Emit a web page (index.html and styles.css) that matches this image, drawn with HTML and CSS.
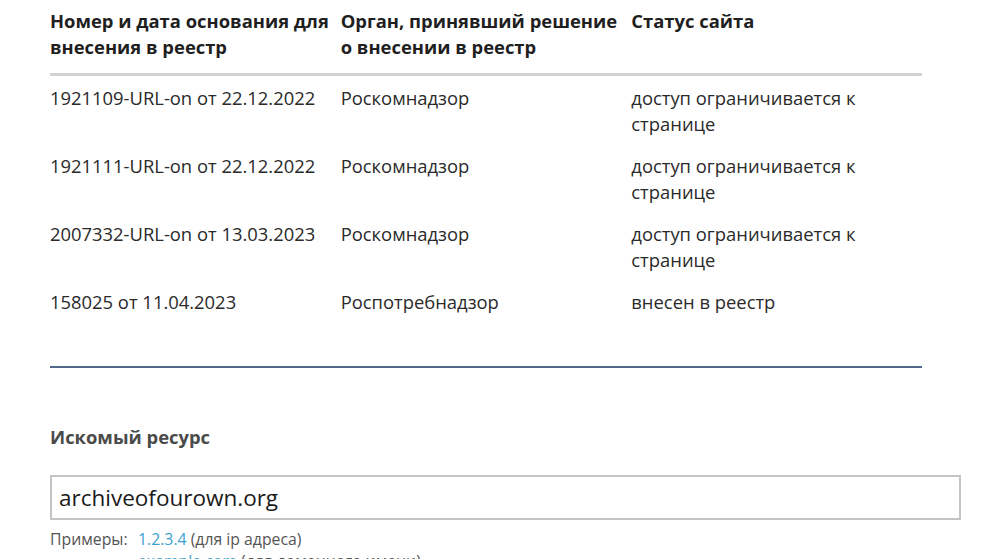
FILE: index.html
```html
<!DOCTYPE html>
<html lang="ru">
<head>
<meta charset="utf-8">
<link rel="stylesheet" href="styles.css">
</head>
<body>
<div class="page">
  <table class="registry">
    <thead>
      <tr>
        <th>Номер и дата основания для внесения в реестр</th>
        <th>Орган, принявший решение о внесении в реестр</th>
        <th>Статус сайта</th>
      </tr>
    </thead>
    <tbody>
      <tr>
        <td>1921109-URL-on от 22.12.2022</td>
        <td>Роскомнадзор</td>
        <td>доступ ограничивается к странице</td>
      </tr>
      <tr>
        <td>1921111-URL-on от 22.12.2022</td>
        <td>Роскомнадзор</td>
        <td>доступ ограничивается к странице</td>
      </tr>
      <tr>
        <td>2007332-URL-on от 13.03.2023</td>
        <td>Роскомнадзор</td>
        <td>доступ ограничивается к странице</td>
      </tr>
      <tr>
        <td>158025 от 11.04.2023</td>
        <td>Роспотребнадзор</td>
        <td>внесен в реестр</td>
      </tr>
    </tbody>
  </table>
  <div class="divider"></div>
  <div class="search">
    <div class="label">Искомый ресурс</div>
    <div class="input">archiveofourown.org</div>
    <div class="examples">
      <span class="ex-title">Примеры:</span>
      <div class="ex-list">
        <div><a class="link">1.2.3.4</a> (для ip адреса)</div>
        <div><a class="link">example.com</a> (для доменного имени)</div>
      </div>
    </div>
  </div>
</div>
</body>
</html>
```

FILE: styles.css
```css
html, body {
  margin: 0;
  padding: 0;
  background: #fff;
}
body {
  font-family: "Open Sans", "Liberation Sans", sans-serif;
  color: #222;
  overflow: hidden;
}
.page {
  padding: 8px 0 0 50px;
}
.registry {
  width: 872px;
  border-collapse: collapse;
  table-layout: fixed;
  font-size: 18.4px;
  line-height: 26px;
}
.registry th {
  text-align: left;
  font-weight: 700;
  vertical-align: top;
  padding: 0 4px 13px 0;
  border-bottom: 3px solid #d2d2d2;
  color: #1f1f1f;
}
.registry td {
  vertical-align: top;
  padding: 8px 8px 8px 0;
  color: #2a2a2a;
}
.registry tbody tr:first-child td {
  padding-top: 9px;
}
.divider {
  width: 872px;
  height: 2px;
  background: #50678a;
  margin-top: 43px;
}
.search {
  padding-top: 57px;
}
.label {
  font-size: 18.4px;
  font-weight: 700;
  color: #4a4a4a;
  line-height: 24px;
}
.input {
  margin-top: 26px;
  width: 893px;
  height: 41px;
  border: 2px solid #c4c4c4;
  padding: 0 7px;
  font-size: 22.5px;
  line-height: 41px;
  color: #1a1a1a;
}
.examples {
  display: flex;
  font-size: 15.8px;
  line-height: 22px;
  color: #555;
  margin-top: 8px;
}
.ex-title {
  width: 88px;
}
.link {
  color: #3c9fd1;
}
```
